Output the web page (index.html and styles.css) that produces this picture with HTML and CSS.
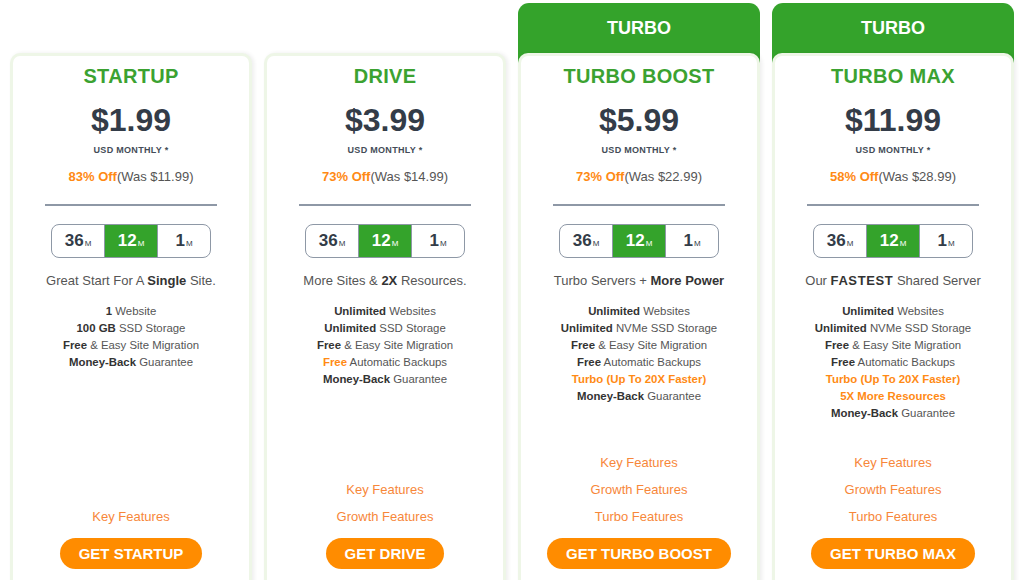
FILE: index.html
```html
<!DOCTYPE html>
<html lang="en">
<head>
<meta charset="utf-8">
<title>Pricing</title>
<link rel="stylesheet" href="styles.css">
</head>
<body>
<div class="plans">
  <div class="col">
    <div class="card">
      <h2 class="name">STARTUP</h2>
      <div class="price">$1.99</div>
      <div class="per">USD MONTHLY *</div>
      <div class="off"><b>83% Off</b>(Was $11.99)</div>
      <hr class="rule">
      <div class="toggle"><span class="seg">36<small>M</small></span><span class="seg on">12<small>M</small></span><span class="seg">1<small>M</small></span></div>
      <p class="tag">Great Start For A <b>Single</b> Site.</p>
      <ul class="feats">
        <li><b>1</b> Website</li>
        <li><b>100 GB</b> SSD Storage</li>
        <li><b>Free</b> &amp; Easy Site Migration</li>
        <li><b>Money-Back</b> Guarantee</li>
      </ul>
      <div class="links"><a>Key Features</a></div>
      <a class="btn">GET STARTUP</a>
    </div>
  </div>
  <div class="col">
    <div class="card">
      <h2 class="name">DRIVE</h2>
      <div class="price">$3.99</div>
      <div class="per">USD MONTHLY *</div>
      <div class="off"><b>73% Off</b>(Was $14.99)</div>
      <hr class="rule">
      <div class="toggle"><span class="seg">36<small>M</small></span><span class="seg on">12<small>M</small></span><span class="seg">1<small>M</small></span></div>
      <p class="tag">More Sites &amp; <b>2X</b> Resources.</p>
      <ul class="feats">
        <li><b>Unlimited</b> Websites</li>
        <li><b>Unlimited</b> SSD Storage</li>
        <li><b>Free</b> &amp; Easy Site Migration</li>
        <li><b class="o">Free</b> Automatic Backups</li>
        <li><b>Money-Back</b> Guarantee</li>
      </ul>
      <div class="links"><a>Key Features</a><a>Growth Features</a></div>
      <a class="btn">GET DRIVE</a>
    </div>
  </div>
  <div class="col turbo">
    <div class="badge">TURBO</div>
    <div class="card">
      <h2 class="name">TURBO BOOST</h2>
      <div class="price">$5.99</div>
      <div class="per">USD MONTHLY *</div>
      <div class="off"><b>73% Off</b>(Was $22.99)</div>
      <hr class="rule">
      <div class="toggle"><span class="seg">36<small>M</small></span><span class="seg on">12<small>M</small></span><span class="seg">1<small>M</small></span></div>
      <p class="tag">Turbo Servers + <b>More Power</b></p>
      <ul class="feats">
        <li><b>Unlimited</b> Websites</li>
        <li><b>Unlimited</b> NVMe SSD Storage</li>
        <li><b>Free</b> &amp; Easy Site Migration</li>
        <li><b>Free</b> Automatic Backups</li>
        <li class="o"><b>Turbo (Up To 20X Faster)</b></li>
        <li><b>Money-Back</b> Guarantee</li>
      </ul>
      <div class="links"><a>Key Features</a><a>Growth Features</a><a>Turbo Features</a></div>
      <a class="btn">GET TURBO BOOST</a>
    </div>
  </div>
  <div class="col turbo">
    <div class="badge">TURBO</div>
    <div class="card">
      <h2 class="name">TURBO MAX</h2>
      <div class="price">$11.99</div>
      <div class="per">USD MONTHLY *</div>
      <div class="off"><b>58% Off</b>(Was $28.99)</div>
      <hr class="rule">
      <div class="toggle"><span class="seg">36<small>M</small></span><span class="seg on">12<small>M</small></span><span class="seg">1<small>M</small></span></div>
      <p class="tag">Our <b class="wide">FASTEST</b> Shared Server</p>
      <ul class="feats">
        <li><b>Unlimited</b> Websites</li>
        <li><b>Unlimited</b> NVMe SSD Storage</li>
        <li><b>Free</b> &amp; Easy Site Migration</li>
        <li><b>Free</b> Automatic Backups</li>
        <li class="o"><b>Turbo (Up To 20X Faster)</b></li>
        <li class="o"><b>5X More Resources</b></li>
        <li><b>Money-Back</b> Guarantee</li>
      </ul>
      <div class="links"><a>Key Features</a><a>Growth Features</a><a>Turbo Features</a></div>
      <a class="btn">GET TURBO MAX</a>
    </div>
  </div>
</div>
</body>
</html>
```

FILE: styles.css
```css
* { box-sizing: border-box; }
html, body {
  margin: 0;
  padding: 0;
  width: 1024px;
  height: 580px;
  overflow: hidden;
  background: #fff;
  font-family: "Liberation Sans", Arial, sans-serif;
  color: #444;
}
.plans {
  display: flex;
  align-items: flex-start;
  gap: 12px;
  padding: 3px 0 0 10px;
}
.col {
  width: 242px;
  flex: none;
  padding-top: 50px;
}
.col.turbo {
  padding-top: 0;
  background: #34a32b;
  border-radius: 11px 11px 0 0;
}
.badge {
  height: 50px;
  display: flex;
  align-items: center;
  justify-content: center;
  color: #fff;
  font-weight: bold;
  font-size: 18px;
}
.card {
  background: #fff;
  border: 3px solid #eef6e7;
  border-bottom: none;
  border-radius: 10px 10px 0 0;
  box-shadow: 2px 0 4px rgba(0, 0, 0, 0.07);
  height: 535px;
  display: flex;
  flex-direction: column;
  align-items: center;
  padding: 8px 0 0;
  text-align: center;
}
.name {
  margin: 0;
  font-size: 20px;
  line-height: 24px;
  font-weight: bold;
  color: #3ba231;
  letter-spacing: 0.3px;
}
.price {
  margin-top: 13px;
  font-size: 32px;
  line-height: 38px;
  font-weight: bold;
  color: #333c48;
}
.per {
  margin-top: 5px;
  font-size: 9px;
  line-height: 12px;
  font-weight: bold;
  color: #444c58;
  letter-spacing: 0.3px;
}
.off {
  margin-top: 13px;
  font-size: 13px;
  line-height: 16px;
  color: #555;
}
.off b { color: #ff8a14; }
.rule {
  width: 172px;
  height: 2px;
  border: 0;
  background: #8e98a6;
  margin: 19px 0 0;
}
.toggle {
  margin-top: 18px;
  display: flex;
  width: 160px;
  height: 34px;
  border: 1px solid #8e98a6;
  border-radius: 8px;
  overflow: hidden;
}
.seg {
  flex: 1;
  display: flex;
  align-items: center;
  justify-content: center;
  font-size: 17px;
  font-weight: bold;
  color: #333c48;
}
.seg + .seg { border-left: 1px solid #8e98a6; }
.seg small {
  font-size: 8px;
  font-weight: normal;
  margin: 5px 0 0 1px;
}
.seg.on {
  background: #34a32b;
  color: #fff;
}
.tag {
  margin: 14px 0 0;
  font-size: 13px;
  line-height: 18px;
  color: #555;
}
.tag b { color: #333; }
.tag .wide { letter-spacing: 0.6px; }
.feats {
  list-style: none;
  margin: 13px 0 0;
  padding: 0;
  font-size: 11.4px;
  line-height: 17px;
  color: #555;
}
.feats b { color: #333; }
.feats .o, .feats .o b, .feats b.o { color: #ff8a14; }
.links {
  margin-top: auto;
  display: flex;
  flex-direction: column;
  align-items: center;
}
.links a {
  font-size: 13px;
  line-height: 27px;
  color: #f7873a;
}
.btn {
  margin: 8px 0 19px;
  background: #ff8c00;
  color: #fff;
  font-weight: bold;
  font-size: 15px;
  line-height: 31px;
  height: 31px;
  padding: 0 19px;
  border-radius: 16px;
}
```
